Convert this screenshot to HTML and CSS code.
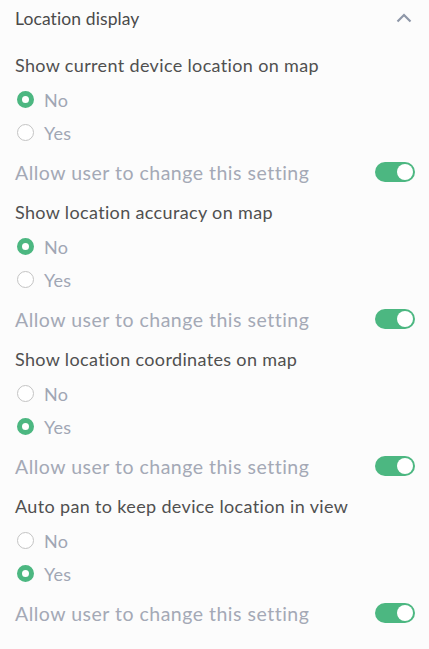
FILE: index.html
```html
<!DOCTYPE html>
<html lang="en">
<head>
  <meta charset="UTF-8" />
  <title>Location display</title>
  <link rel="stylesheet" href="styles.css">
</head>
<body>
  <div class="panel">
    <div class="panel-head">
      <span class="panel-title">Location display</span>
      <svg class="chevron" width="16" height="10" viewBox="0 0 16 10"><path d="M1.5 8.5 L8 2 L14.5 8.5" fill="none" stroke="#8e97a8" stroke-width="2.2"/></svg>
    </div>

    <div class="setting">
      <div class="setting-label">Show current device location on map</div>
      <div class="radio-group">
        <div class="radio-row"><span class="radio checked"></span>No</div>
        <div class="radio-row"><span class="radio"></span>Yes</div>
      </div>
      <div class="allow-row">Allow user to change this setting <span class="toggle on"></span></div>
    </div>

    <div class="setting">
      <div class="setting-label">Show location accuracy on map</div>
      <div class="radio-group">
        <div class="radio-row"><span class="radio checked"></span>No</div>
        <div class="radio-row"><span class="radio"></span>Yes</div>
      </div>
      <div class="allow-row">Allow user to change this setting <span class="toggle on"></span></div>
    </div>

    <div class="setting">
      <div class="setting-label">Show location coordinates on map</div>
      <div class="radio-group">
        <div class="radio-row"><span class="radio"></span>No</div>
        <div class="radio-row"><span class="radio checked"></span>Yes</div>
      </div>
      <div class="allow-row">Allow user to change this setting <span class="toggle on"></span></div>
    </div>

    <div class="setting">
      <div class="setting-label">Auto pan to keep device location in view</div>
      <div class="radio-group">
        <div class="radio-row"><span class="radio"></span>No</div>
        <div class="radio-row"><span class="radio checked"></span>Yes</div>
      </div>
      <div class="allow-row">Allow user to change this setting <span class="toggle on"></span></div>
    </div>
  </div>
</body>
</html>
```

FILE: styles.css
```css
body { margin: 0; background: #fcfcfc; font-family: Lato, "Noto Sans", sans-serif; color: #4a4a4a; }
.panel { padding: 0 14px 0 15px; }
.panel-head { display: flex; align-items: center; justify-content: space-between; height: 36px; padding-bottom: 7px; }
.panel-title { font-size: 17.5px; letter-spacing: 0.1px; }
.chevron { margin-right: 3px; }
.setting-label { margin-top: 7px; font-size: 18px; letter-spacing: 0.35px; line-height: 30px; color: #505050; }
.radio-group { margin-top: 3px; }
.radio-row { display: flex; align-items: center; height: 33px; font-size: 18px; letter-spacing: 0.3px; color: #a0a6b4; }
.radio { width: 15px; height: 15px; border: 1px solid #c4c4c4; border-radius: 50%; background: #fff; margin: 0 10px 0 2px; }
.radio.checked { width: 7px; height: 7px; border: 5px solid #4cb781; }
.allow-row { display: flex; align-items: center; justify-content: space-between; height: 36px; margin-top: 5px; font-size: 19.5px; letter-spacing: 0.5px; color: #a4a9b6; }
.toggle { position: relative; width: 40px; height: 20px; border-radius: 10px; background: #4cb781; }
.toggle::after { content: ""; position: absolute; top: 2px; right: 2px; width: 16px; height: 16px; border-radius: 50%; background: #fff; }
```
